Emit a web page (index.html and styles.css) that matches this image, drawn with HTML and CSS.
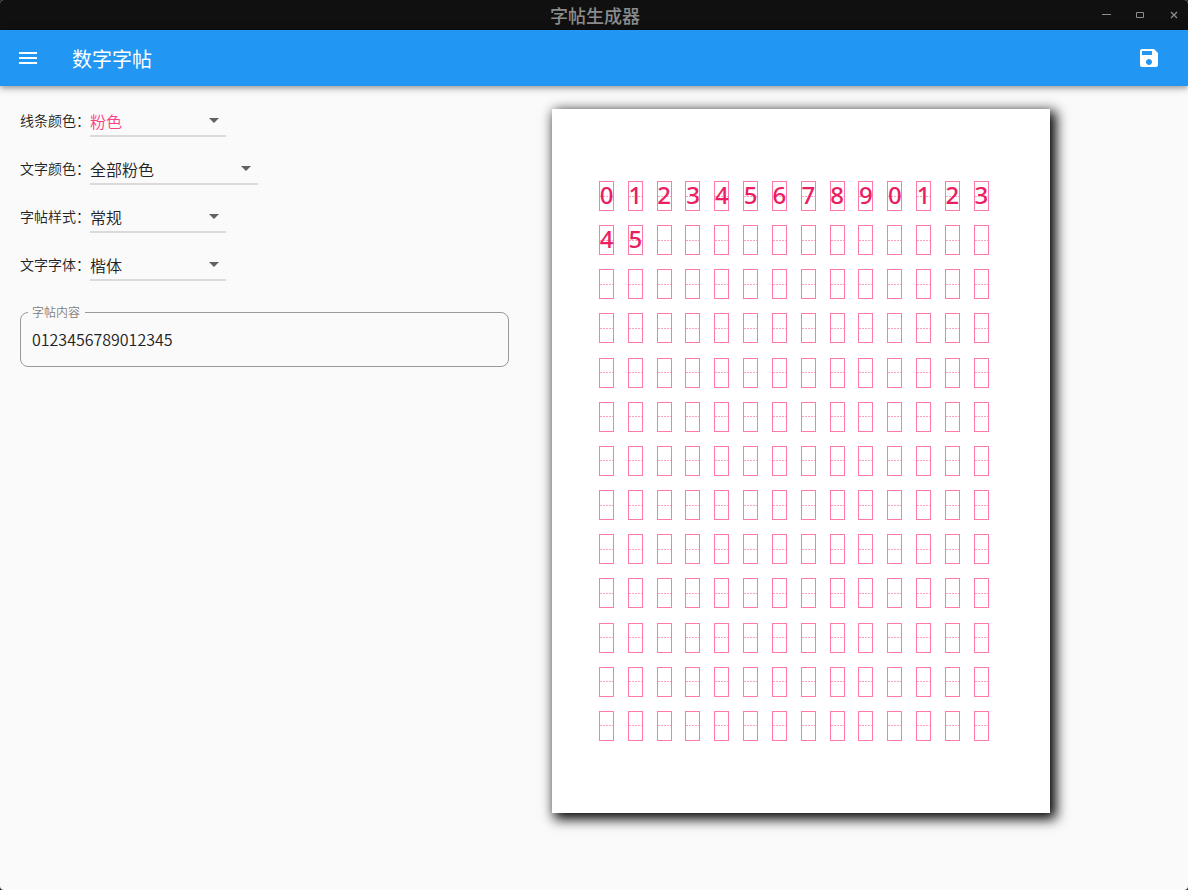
FILE: index.html
```html
<!DOCTYPE html>
<html lang="zh-CN">
<head>
<meta charset="utf-8">
<meta name="viewport" content="width=device-width, initial-scale=1">
<title>字帖生成器</title>
<link rel="stylesheet" href="styles.css">
</head>
<body>
<div class="window">
  <header class="titlebar">
    <span class="titlebar-name">字帖生成器</span>
    <div class="window-controls">
      <button class="window-button" type="button" aria-label="最小化"><svg viewBox="0 0 12 12"><path d="M2 5.500h9"/></svg></button>
      <button class="window-button" type="button" aria-label="最大化"><svg viewBox="0 0 12 12"><path d="M2.500 3.500h7v5h-7z"/></svg></button>
      <button class="window-button" type="button" aria-label="关闭"><svg viewBox="0 0 12 12"><path d="M3 3l6 6M9 3l-6 6" stroke-width="1.300"/></svg></button>
    </div>
  </header>
  <div class="appbar">
    <button class="icon-button" type="button" aria-label="菜单"><svg viewBox="0 0 24 24"><path d="M3 18h18v-2H3v2zm0-5h18v-2H3v2zm0-7v2h18V6H3z"/></svg></button>
    <h1 class="appbar-title">数字字帖</h1>
    <button class="icon-button" type="button" aria-label="保存"><svg viewBox="0 0 24 24"><path d="M17 3H5a2 2 0 0 0-2 2v14c0 1.100.900 2 2 2h14c1.100 0 2-.900 2-2V7l-4-4zm-5 16c-1.660 0-3-1.340-3-3s1.340-3 3-3 3 1.340 3 3-1.340 3-3 3zm3-10H5V5h10v4z"/></svg></button>
  </div>
  <main class="content">
    <form class="settings">
      <div class="row">
        <label class="row-label" for="line-color">线条颜色：</label>
        <span class="dropdown"><select class="dropdown-select pink" id="line-color"><option>粉色</option></select></span>
      </div>
      <div class="row">
        <label class="row-label" for="text-color">文字颜色：</label>
        <span class="dropdown wide"><select class="dropdown-select" id="text-color"><option>全部粉色</option></select></span>
      </div>
      <div class="row">
        <label class="row-label" for="sheet-style">字帖样式：</label>
        <span class="dropdown"><select class="dropdown-select" id="sheet-style"><option>常规</option></select></span>
      </div>
      <div class="row">
        <label class="row-label" for="text-font">文字字体：</label>
        <span class="dropdown"><select class="dropdown-select" id="text-font"><option>楷体</option></select></span>
      </div>
      <fieldset class="field">
        <legend class="field-legend"><label for="sheet-text">字帖内容</label></legend>
        <input class="field-input" id="sheet-text" type="text" value="0123456789012345">
      </fieldset>
    </form>
    <section class="preview">
      <div class="sheet" id="sheet"></div>
    </section>
  </main>
</div>
<script src="sheet.js"></script>
</body>
</html>
```
FILE: styles.css
```css
* { box-sizing: border-box; }
body {
  margin: 0;
  background: #222;
  font-family: "Noto Sans CJK SC", sans-serif;
  font-weight: 350;
  color: #212121;
}
button {
  padding: 0;
  border: 0;
  background: none;
}
.window {
  display: flex;
  flex-direction: column;
  height: 100vh;
  overflow: hidden;
  border-radius: 4px;
  background: #fafafa;
}
.titlebar {
  display: grid;
  grid-template-columns: 1fr auto 1fr;
  align-items: center;
  height: 30px;
  padding-right: 8px;
  padding-left: 10px;
  background: #101010;
}
.titlebar-name {
  grid-column: 2;
  font-size: 18px;
  font-weight: 500;
  line-height: 30px;
  color: #8c8c8c;
}
.window-controls {
  display: flex;
  justify-content: flex-end;
  gap: 22px;
}
.window-button {
  width: 12px;
  height: 12px;
}
.window-button svg {
  display: block;
  fill: none;
  stroke: #8c8c8c;
}
.appbar {
  z-index: 1;
  display: flex;
  align-items: center;
  height: 56px;
  padding: 0 27px 0 16px;
  background: #2196f3;
  color: #fff;
  box-shadow: 0 2px 4px -1px rgba(0, 0, 0, .2), 0 4px 5px rgba(0, 0, 0, .14), 0 1px 10px rgba(0, 0, 0, .12);
}
.icon-button {
  width: 24px;
  height: 24px;
}
.icon-button svg {
  display: block;
  fill: #fff;
}
.appbar-title {
  flex: 1;
  margin: 0;
  padding: 2px 0 0 32px;
  font-size: 20px;
  font-weight: 400;
  line-height: 28px;
}
.content {
  flex: 1;
  display: grid;
  grid-template-columns: 4fr 5fr;
  min-height: 0;
}
.settings {
  min-width: 0;
  padding: 11px 19px 11px 20px;
}
.row {
  display: flex;
  align-items: center;
  height: 48px;
}
.row-label {
  width: 70px;
  padding-bottom: 2px;
  font-size: 14px;
  line-height: 20px;
  white-space: nowrap;
}
.dropdown {
  position: relative;
  width: 136px;
}
.dropdown.wide { width: 168px; }
.dropdown::after {
  content: "";
  position: absolute;
  top: 13px;
  right: 7px;
  border: 5px solid transparent;
  border-top-color: #616161;
  border-bottom: 0;
  pointer-events: none;
}
.dropdown-select {
  display: block;
  width: 100%;
  height: 32px;
  padding: 2px 0 0;
  border: 0;
  border-bottom: 2px solid #dadada;
  border-radius: 0;
  appearance: none;
  background: transparent;
  font: 350 16px/24px "Noto Sans CJK SC", sans-serif;
  color: #212121;
}
.dropdown-select.pink { color: #ff4081; }
.field {
  min-width: 0;
  margin: 15px 0 0;
  padding: 0 11px 8px;
  border: 1px solid #999;
  border-radius: 8px;
}
.field-legend {
  margin-left: -4px;
  padding: 0 5px 0 4px;
  font-size: 12px;
  line-height: 16px;
  color: #808080;
}
.field-input {
  display: block;
  width: 100%;
  height: 38px;
  padding: 0;
  border: 0;
  outline: 0;
  background: transparent;
  font: 350 16px/24px "Noto Sans CJK SC", sans-serif;
  color: #212121;
}
.preview {
  min-height: 0;
  padding: 23px 24px 77px;
}
.sheet {
  display: grid;
  grid-template-columns: repeat(14, 15px);
  grid-template-rows: repeat(13, 30px);
  place-content: space-between;
  height: 100%;
  aspect-ratio: 210 / 297;
  padding: 72px 61px 72px 47px;
  background: #fff;
  box-shadow: 4px 4px 12px 2px #000;
}
.cell {
  display: flex;
  align-items: center;
  justify-content: center;
  padding-bottom: 2px;
  border: 1px solid #ff7aa8;
  background: repeating-linear-gradient(90deg, #ffa0c0 0 2px, #fff 2px 3px) center / 100% 1px no-repeat;
  font: 500 24px/26px "Noto Sans", sans-serif;
  color: #e91e63;
}
```
FILE: sheet.js
```js
const COLUMNS = 14;
const ROWS = 13;
const sheet = document.getElementById("sheet");
const input = document.getElementById("sheet-text");

function drawSheet() {
  sheet.replaceChildren();
  for (let i = 0; i < COLUMNS * ROWS; i++) {
    const cell = document.createElement("span");
    cell.className = "cell";
    cell.textContent = input.value[i] || "";
    sheet.append(cell);
  }
}

input.addEventListener("input", drawSheet);
drawSheet();
```
